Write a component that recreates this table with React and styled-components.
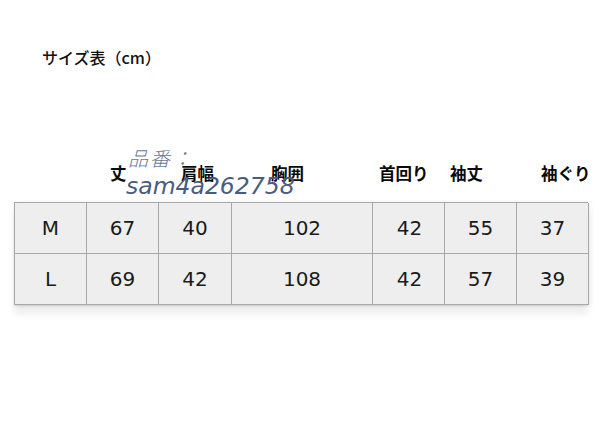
import React from 'react';
import styled, { createGlobalStyle } from 'styled-components';

const GlobalStyle = createGlobalStyle`
  html, body {
    margin: 0;
    padding: 0;
    background: #fff;
  }
`;

const Page = styled.div`
  position: relative;
  width: 600px;
  height: 423px;
  padding: 46px 0 0 14px;
  box-sizing: border-box;
  font-family: "Noto Sans CJK JP", "DejaVu Sans", sans-serif;
  color: #111;
`;

const Title = styled.div`
  margin-left: 28px;
  font-size: 16px;
  line-height: 22px;
  font-weight: 500;
`;

const COLS = '72px 72px 73px 141px 72px 72px 72px';

const HeaderRow = styled.div`
  display: grid;
  grid-template-columns: ${COLS};
  margin-top: 94px;
  height: 22px;
`;

const Label = styled.div`
  padding-left: ${(p) => p.indent}px;
  font-size: 16.5px;
  line-height: 22px;
  font-weight: 700;
  white-space: nowrap;
  color: #0a0a0a;
`;

const Table = styled.div`
  display: grid;
  grid-template-columns: ${COLS};
  width: 574px;
  margin-top: 18px;
  background: #eeeeee;
  border-top: 1px solid #a8a8a8;
  border-left: 1px solid #a8a8a8;
  box-sizing: border-box;
  box-shadow: 0 1px 2px rgba(0, 0, 0, 0.12), 0 9px 7px rgba(0, 0, 0, 0.07),
    3px 0 4px rgba(0, 0, 0, 0.05);
`;

const Cell = styled.div`
  height: 51px;
  display: flex;
  align-items: center;
  justify-content: center;
  border-right: 1px solid #a8a8a8;
  border-bottom: 1px solid #a8a8a8;
  box-sizing: border-box;
  font-family: "DejaVu Sans", "Liberation Sans", sans-serif;
  font-size: 20px;
  color: #1a1a1a;
  padding-left: ${(p) => p.shift || 0}px;
`;

const Watermark = styled.div`
  position: absolute;
  left: 126px;
  top: 146px;
  color: #4a5b80;
  font-style: italic;
  pointer-events: none;
`;

const Code = styled.div`
  font-family: "Noto Sans CJK JP", serif;
  font-weight: 300;
  font-size: 20px;
  line-height: 24px;
  margin-left: 2px;
  letter-spacing: 2px;
  color: #6a7896;
`;

const Number = styled.div`
  font-family: "DejaVu Sans", sans-serif;
  font-size: 23.5px;
  line-height: 28px;
  margin-top: 2px;
`;

const headers = [
  { text: '', indent: 0 },
  { text: '丈', indent: 24 },
  { text: '肩幅', indent: 23 },
  { text: '胸囲', indent: 40 },
  { text: '首回り', indent: 7 },
  { text: '袖丈', indent: 6 },
  { text: '袖ぐり', indent: 25 },
];

const rows = [
  ['M', '67', '40', '102', '42', '55', '37'],
  ['L', '69', '42', '108', '42', '57', '39'],
];

const shifts = [0, 0, 0, 0, 2, 0, 0];

export default function App() {
  return (
    <Page>
      <GlobalStyle />
      <Title>サイズ表（cm）</Title>
      <HeaderRow>
        {headers.map((h, i) => (
          <Label key={i} indent={h.indent}>{h.text}</Label>
        ))}
      </HeaderRow>
      <Table>
        {rows.map((r, ri) =>
          r.map((v, ci) => (
            <Cell key={ri + '-' + ci} shift={shifts[ci]}>{v}</Cell>
          ))
        )}
      </Table>
      <Watermark>
        <Code>品番：</Code>
        <Number>sam4a262758</Number>
      </Watermark>
    </Page>
  );
}
